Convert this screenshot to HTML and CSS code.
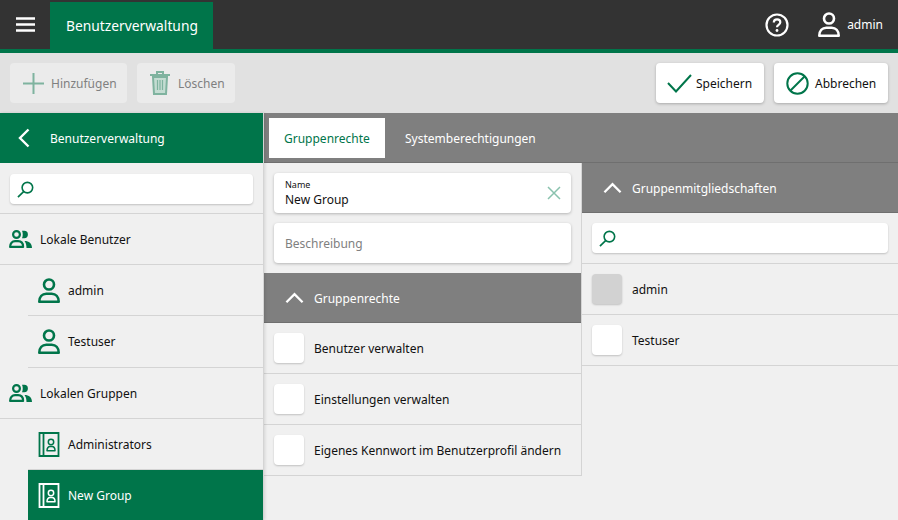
FILE: index.html
```html
<!DOCTYPE html>
<html>
<head>
	<meta name="viewport" content="width=device-width, initial-scale=1">
	<link rel="stylesheet" href="styles.css">
</head>
<body>
	<svg class="defs" width="0" height="0">
		<symbol id="i-user" viewBox="0 0 22 25">
			<circle cx="11" cy="6.500" r="5" fill="none" stroke="currentColor" stroke-width="2.600"/>
			<path d="M1.300 23.700c0-5 3-8 7-8h5.400c4 0 7 3 7 8z" fill="none" stroke="currentColor" stroke-width="2.600" stroke-linejoin="round"/>
		</symbol>
		<symbol id="i-users" viewBox="0 0 23 18">
			<circle cx="7.500" cy="4.500" r="3.400" fill="none" stroke="currentColor" stroke-width="2.200"/>
			<path d="M1.100 16.900c0-3.700 2.100-5.700 5-5.700h3c2.900 0 5 2 5 5.700z" fill="none" stroke="currentColor" stroke-width="2.200" stroke-linejoin="round"/>
			<path d="M13 .8h2.200a3.700 3.700 0 0 1 0 7.400H13c1-2.200 1-5.200 0-7.400z M15.500 11c4.500 0 7.500 2.500 7.500 7h-5.500c0-3-.6-5.300-2-7z" fill="currentColor"/>
		</symbol>
		<symbol id="i-group" viewBox="0 0 21 25">
			<path d="M1 1h19v23H1z M5 1v23" fill="none" stroke="currentColor" stroke-width="1.800"/>
			<circle cx="12.500" cy="10" r="2.700" fill="none" stroke="currentColor" stroke-width="1.500"/>
			<path d="M8.500 18.800c0-3 1.500-4.300 3-4.300h2c1.500 0 3 1.300 3 4.300z" fill="none" stroke="currentColor" stroke-width="1.500" stroke-linejoin="round"/>
		</symbol>
		<symbol id="i-search" viewBox="0 0 18 18">
			<circle cx="11" cy="7" r="5.600" fill="none" stroke="currentColor" stroke-width="1.700"/>
			<path d="M7 11.200 1 17" fill="none" stroke="currentColor" stroke-width="1.800"/>
		</symbol>
		<symbol id="i-up" viewBox="0 0 20 12">
			<path d="M1.500 10.500 10 2l8.500 8.500" fill="none" stroke="currentColor" stroke-width="2.400"/>
		</symbol>
	</svg>

	<header class="topbar">
		<button class="menu-btn">
			<svg width="19" height="15" viewBox="0 0 19 15"><path d="M0 1.500h19M0 7.500h19M0 13.500h19" stroke="#fff" stroke-width="2.600"/></svg>
		</button>
		<div class="app-tab">Benutzerverwaltung</div>
		<div class="topbar-right">
			<svg class="help" width="24" height="24" viewBox="0 0 24 24">
				<circle cx="12" cy="12" r="10.500" fill="none" stroke="#fff" stroke-width="2.200"/>
				<path d="M8.800 9.500c0-2 1.400-3.200 3.300-3.200s3.200 1.200 3.200 2.900c0 2.500-3.300 2.600-3.300 5" fill="none" stroke="#fff" stroke-width="2.200"/>
				<circle cx="12" cy="17.500" r="1.400" fill="#fff"/>
			</svg>
			<div class="user">
				<svg class="user-icon" width="24" height="25"><use href="#i-user"/></svg>
				<span>admin</span>
			</div>
		</div>
	</header>

	<div class="toolbar">
		<button class="tool tool-off tool-add">
			<svg width="21" height="21" viewBox="0 0 21 21"><path d="M10.500 0v21M0 10.500h21" stroke="#7fb39f" stroke-width="2"/></svg>
			Hinzufügen
		</button>
		<button class="tool tool-off tool-del">
			<svg width="20" height="24" viewBox="0 0 20 24">
				<path d="M3 6h14l-1 17H4z" fill="#c4dcd2" stroke="#7fb39f" stroke-width="2"/>
				<path d="M0 4h20M7 3V1h6v2" fill="none" stroke="#7fb39f" stroke-width="2"/>
				<path d="M7.500 9v10M10 9v10M12.500 9v10" stroke="#7fb39f" stroke-width="1.200"/>
			</svg>
			Löschen
		</button>
		<div class="toolbar-gap"></div>
		<button class="tool tool-save">
			<svg width="25" height="19" viewBox="0 0 25 19"><path d="M1 9l8 8.500L24 1" fill="none" stroke="#00754a" stroke-width="2"/></svg>
			Speichern
		</button>
		<button class="tool tool-cancel">
			<svg width="23" height="23" viewBox="0 0 23 23"><circle cx="11.500" cy="11.500" r="10.200" fill="none" stroke="#00754a" stroke-width="2"/><path d="M4.500 18.500l14-14" stroke="#00754a" stroke-width="2"/></svg>
			Abbrechen
		</button>
	</div>

	<div class="main">
		<aside class="sidebar">
			<div class="side-head">
				<svg width="12" height="20" viewBox="0 0 12 20"><path d="M10.500 1.500 2 10l8.500 8.500" fill="none" stroke="#fff" stroke-width="2.400"/></svg>
				<span>Benutzerverwaltung</span>
			</div>
			<div class="search-row side-search">
				<div class="search"><svg width="17" height="17"><use href="#i-search"/></svg></div>
			</div>
			<div class="tree-head">
				<svg width="23" height="18"><use href="#i-users"/></svg>
				<span>Lokale Benutzer</span>
			</div>
			<div class="tree-item">
				<svg width="22" height="25"><use href="#i-user"/></svg>
				<span>admin</span>
			</div>
			<div class="tree-item tree-last">
				<svg width="22" height="25"><use href="#i-user"/></svg>
				<span>Testuser</span>
			</div>
			<div class="tree-head">
				<svg width="23" height="18"><use href="#i-users"/></svg>
				<span>Lokalen Gruppen</span>
			</div>
			<div class="tree-item">
				<svg width="22" height="25"><use href="#i-group"/></svg>
				<span>Administrators</span>
			</div>
			<div class="tree-item tree-active">
				<svg width="22" height="25"><use href="#i-group"/></svg>
				<span>New Group</span>
			</div>
		</aside>

		<section class="content">
			<nav class="tabs">
				<div class="tab tab-active">Gruppenrechte</div>
				<div class="tab">Systemberechtigungen</div>
			</nav>
			<div class="columns">
				<div class="col col-left">
					<div class="fields">
						<div class="field field-filled">
							<div>
								<label>Name</label>
								<div class="field-value">New Group</div>
							</div>
							<svg width="14" height="14" viewBox="0 0 14 14"><path d="M1 1l12 12M13 1 1 13" stroke="#8ac2ae" stroke-width="1.500"/></svg>
						</div>
						<div class="field field-empty">Beschreibung</div>
					</div>
					<div class="group-head">
						<svg width="19" height="12"><use href="#i-up"/></svg>
						<span>Gruppenrechte</span>
					</div>
					<div class="check-row"><div class="check"></div><span>Benutzer verwalten</span></div>
					<div class="check-row"><div class="check"></div><span>Einstellungen verwalten</span></div>
					<div class="check-row"><div class="check"></div><span>Eigenes Kennwort im Benutzerprofil ändern</span></div>
				</div>
				<div class="col col-right">
					<div class="group-head">
						<svg width="19" height="12"><use href="#i-up"/></svg>
						<span>Gruppenmitgliedschaften</span>
					</div>
					<div class="search-row">
						<div class="search"><svg width="17" height="17"><use href="#i-search"/></svg></div>
					</div>
					<div class="check-row"><div class="check check-off"></div><span>admin</span></div>
					<div class="check-row"><div class="check"></div><span>Testuser</span></div>
				</div>
			</div>
		</section>
	</div>
</body>
</html>
```
FILE: styles.css
```css
* {
	box-sizing: border-box;
}

html, body {
	height: 520px;
	overflow: hidden;
}

body {
	margin: 0;
	background-color: #f0f0f0;
	color: #111;
	font-family: "Noto Sans", sans-serif;
	font-size: 12px;
}

.defs {
	position: absolute;
}

/* top bar */
.topbar {
	display: flex;
	height: 53px;
	background-color: #333;
	border-bottom: 4px solid #00754a;
	padding-top: 2px;
	color: #fff;
}

.menu-btn {
	display: flex;
	align-items: center;
	justify-content: center;
	width: 50px;
	padding: 0 0 2px;
	border: none;
	background: none;
}

.app-tab {
	display: flex;
	align-items: center;
	width: 163px;
	padding-left: 16px;
	background-color: #00754a;
	font-size: 13.8px;
}

.topbar-right {
	display: flex;
	align-items: center;
	gap: 28px;
	margin-left: auto;
	padding: 0 15px 2px 0;
}

.user {
	display: flex;
	align-items: center;
	gap: 6px;
}

.user-icon {
	color: #fff;
}

/* toolbar */
.toolbar {
	display: flex;
	gap: 10px;
	height: 60px;
	padding: 10px;
	background-color: #e1e1e1;
}

.toolbar-gap {
	flex: 1;
}

.tool {
	display: flex;
	align-items: center;
	gap: 7px;
	height: 40px;
	padding: 0 10px;
	border: none;
	border-radius: 4px;
	background-color: #fff;
	box-shadow: 0 1px 3px rgba(0, 0, 0, 0.25);
	color: #111;
	font-family: inherit;
	font-size: 12px;
}

.tool-off {
	background-color: #ebebeb;
	box-shadow: none;
	color: #808080;
}

.tool-add {
	width: 117px;
	padding-left: 13px;
}

.tool-del {
	width: 98px;
	padding-left: 13px;
	gap: 8px;
}

.tool-save {
	width: 108px;
	padding-left: 11px;
	gap: 4px;
}

.tool-cancel {
	width: 114px;
	padding-left: 12px;
	gap: 6px;
}

/* layout below the toolbar */
.main {
	display: flex;
	height: 407px;
}

.sidebar {
	flex: 0 0 264px;
	border-right: 1px solid #d4d4d4;
	box-shadow: 1px 0 3px rgba(0, 0, 0, 0.12);
	position: relative;
	background-color: #f0f0f0;
}

.side-head {
	display: flex;
	align-items: center;
	gap: 20px;
	height: 50px;
	padding-left: 18px;
	background-color: #00754a;
	color: #fff;
}

.search-row {
	height: 51px;
	padding: 10px;
	border-bottom: 1px solid #d4d4d4;
}

.side-search {
	padding-top: 11px;
}

.search {
	display: flex;
	align-items: center;
	height: 30px;
	padding-left: 7px;
	border-radius: 4px;
	background-color: #fff;
	box-shadow: 0 1px 2px rgba(0, 0, 0, 0.2);
	color: #00754a;
}

.tree-head {
	display: flex;
	align-items: center;
	gap: 8px;
	height: 51px;
	padding-left: 9px;
	border-bottom: 1px solid #d4d4d4;
	color: #111;
}

.tree-head svg, .tree-item svg {
	color: #00754a;
}

.tree-item {
	display: flex;
	align-items: center;
	gap: 8px;
	height: 51px;
	margin-left: 28px;
	padding-left: 10px;
	border-bottom: 1px solid #d4d4d4;
}

.tree-item.tree-last {
	height: 52px;
}

.tree-item.tree-active {
	background-color: #00754a;
	border-bottom: none;
	color: #fff;
}

.tree-item.tree-active svg {
	color: #fff;
}

/* right part */
.content {
	flex: 1;
	min-width: 0;
}

.tabs {
	display: flex;
	height: 50px;
	padding: 5px 5px 0;
	background-color: #7f7f7f;
	border-bottom: 1px solid #6f6f6f;
}

.tab {
	display: flex;
	align-items: center;
	height: 40px;
	padding: 0 20px;
	color: #fff;
}

.tab-active {
	width: 116px;
	padding: 0 15px;
	background-color: #fff;
	color: #00754a;
}

.columns {
	display: flex;
}

.col {
	flex: 1;
}

.col-left {
	flex: 0 0 318px;
	height: 313px;
	border-right: 1px solid #d4d4d4;
}

.fields {
	display: flex;
	flex-direction: column;
	gap: 10px;
	padding: 10px;
}

.field {
	height: 40px;
	border-radius: 4px;
	background-color: #fff;
	box-shadow: 0 1px 3px rgba(0, 0, 0, 0.25);
}

.field-filled {
	display: flex;
	align-items: center;
	justify-content: space-between;
	padding: 0 10px 0 11px;
}

.field-filled label {
	display: block;
	font-size: 9px;
	line-height: 11px;
}

.field-value {
	margin-top: 2px;
	line-height: 16px;
}

.field-empty {
	display: flex;
	align-items: center;
	padding-left: 11px;
	color: #808080;
}

.group-head {
	display: flex;
	align-items: center;
	gap: 10px;
	height: 50px;
	padding: 1px 0 0 21px;
	background-color: #7f7f7f;
	border-bottom: 1px solid #6f6f6f;
	color: #fff;
}

.check-row {
	display: flex;
	align-items: center;
	gap: 10px;
	height: 51px;
	padding-left: 10px;
	border-bottom: 1px solid #d4d4d4;
}

.check {
	width: 30px;
	height: 30px;
	border-radius: 4px;
	background-color: #fff;
	box-shadow: 0 1px 2px rgba(0, 0, 0, 0.2);
}

.check-off {
	background-color: #d2d2d2;
}
```
